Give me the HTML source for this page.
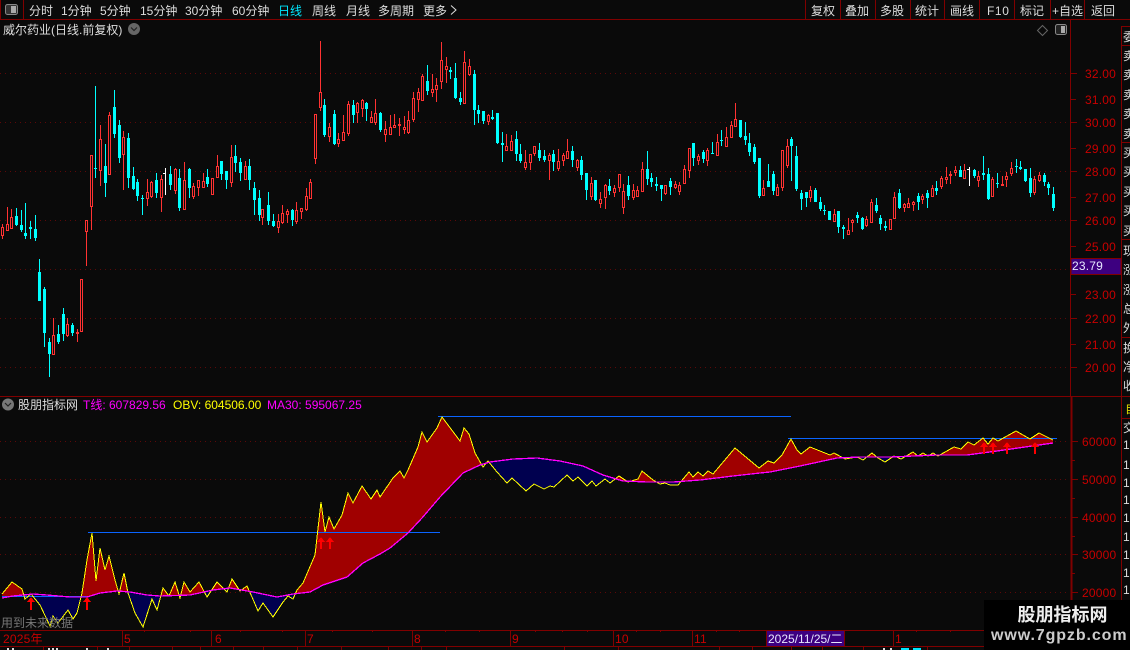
<!DOCTYPE html>
<html><head><meta charset="utf-8"><title>威尔药业</title>
<style>
html,body{margin:0;padding:0;background:#0a0a0a;width:1130px;height:650px;overflow:hidden}
svg{display:block;position:absolute;left:0;top:0}
text{font-family:"Liberation Sans","WenQuanYi Zen Hei","Noto Sans CJK SC",sans-serif;font-size:12px;fill:#ddd}
.p{fill:#c80000;letter-spacing:.2px}
.s{fill:#ddd}
</style></head><body>
<svg width="1130" height="650" viewBox="0 0 1130 650" xmlns="http://www.w3.org/2000/svg">
<rect width="1130" height="650" fill="#0a0a0a"/>
<!-- grid -->
<path d="M0 73.5H1070M0 122.5H1070M0 171.5H1070M0 220.5H1070M0 269.5H1070M0 318.5H1070M0 367.5H1070M0 441.5H1070M0 479.5H1070M0 517.5H1070M0 554.5H1070M0 592.5H1070" stroke="#5c0808" stroke-dasharray="1 4" fill="none"/>
<!-- frame -->
<g shape-rendering="crispEdges" stroke="#800000" fill="none">
<path d="M0 19.5H1130M0 396.5H1130M0 630.5H1130M0 646.5H1130"/>
<path d="M0.5 0V19M23.5 0V19M805.5 0V19M840.5 0V19M875.5 0V19M910.5 0V19M944.5 0V19M979.5 0V19M1014.5 0V19M1050.5 0V19M1084.5 0V19"/>
<path d="M1070.5 20V396M1121.5 26V650M1121 26.5H1130M1121 45.5H1130M1121 142.5H1130M1121 239.5H1130M1121 337.5H1130M1121 418.5H1130" />
<path d="M1071.5 396V630" stroke-width="2"/>
<path d="M1071 73.5h6M1071 99.5h5M1071 122.5h6M1071 148.5h5M1071 171.5h6M1071 197.5h5M1071 220.5h6M1071 246.5h5M1071 294.5h5M1071 318.5h6M1071 344.5h5M1071 367.5h6M1072 441.5h6M1072 460.5h3M1072 479.5h6M1072 498.5h3M1072 517.5h6M1072 536.5h3M1072 554.5h6M1072 573.5h3M1072 592.5h6"/>
<path d="M122.5 630v16M211.5 630v16M305.5 630v16M412.5 630v16M510.5 630v16M613.5 630v16M692.5 630v16M893.5 630v16M144.5 630v2M190.5 630v2M240.5 630v2M282.5 630v2M332.5 630v2M372.5 630v2M445.5 630v2M479.5 630v2M535.5 630v2M562.5 630v2M587.5 630v2M636.5 630v2M660.5 630v2M716.5 630v2M739.5 630v2M916.5 630v2M950.5 630v2"/>
<path d="M43.5 646v4M97.5 646v4M129.5 646v4M172.5 646v4M200.5 646v4M233.5 646v4M263.5 646v4M297.5 646v4M341.5 646v4M388.5 646v4M421.5 646v4M446.5 646v4M564.5 646v4M618.5 646v4M719.5 646v4M752.5 646v4M791.5 646v4M822.5 646v4M863.5 646v4M927.5 646v4"/>
</g>
<!-- candles: wicks -->
<g shape-rendering="crispEdges" fill="none">
<path stroke="#0ff" d="M16.5 208V226M21.5 210V232M25.5 203V239M30.5 221V239M35.5 215V241M39.5 259V301M44.5 287V347M49.5 338V377M58.5 325V344M63.5 308V341M72.5 323V336M95.5 86V178M105.5 144V197M114.5 90V138M119.5 120V163M128.5 133V188M133.5 167V190M137.5 179V201M142.5 195V215M156.5 173V198M170.5 166V190M179.5 169V211M189.5 168V198M207.5 169V187M221.5 161V180M226.5 171V189M235.5 145V172M240.5 158V181M249.5 159V190M254.5 182V215M259.5 190V221M268.5 192V225M273.5 214V227M292.5 209V226M324.5 99V137M334.5 110V145M353.5 100V123M366.5 102V121M380.5 112V132M427.5 65V95M450.5 67V79M455.5 63V99M460.5 92V105M474.5 70V125M478.5 105V123M483.5 111V124M492.5 110V120M497.5 113V144M502.5 132V162M516.5 131V161M520.5 144V163M539.5 143V161M544.5 150V162M553.5 150V171M572.5 146V167M581.5 156V180M586.5 173V200M595.5 180V201M609.5 179V195M628.5 176V200M647.5 151V185M651.5 173V187M656.5 177V191M661.5 185V201M670.5 178V195M693.5 143V166M703.5 150V163M712.5 142V154M721.5 130V146M740.5 120V138M745.5 122V145M749.5 133V156M754.5 144V164M759.5 158V198M768.5 164V187M773.5 171V195M791.5 137V181M796.5 146V191M801.5 190V210M806.5 192V207M815.5 188V202M820.5 197V211M824.5 205V215M829.5 211V220M838.5 211V233M843.5 225V239M857.5 212V223M862.5 217V230M876.5 198V213M880.5 215V230M885.5 221V231M899.5 189V209M918.5 193V210M927.5 190V208M936.5 181V195M960.5 166V177M974.5 169V178M983.5 156V180M988.5 168V200M997.5 173V188M1016.5 159V173M1020.5 161V170M1025.5 169V182M1030.5 168V197M1044.5 173V186M1048.5 182V195M1053.5 187V211"/>
<path stroke="#0ff" stroke-width="3" d="M16.5 216V225M21.5 225V230M25.5 233V236M30.5 227V229M35.5 229V238M39.5 272V301M44.5 289V333M49.5 342V354M58.5 334V342M63.5 314V334M72.5 325V333M95.5 168V169M105.5 166V183M114.5 107V134M119.5 125V158M128.5 138V178M133.5 176V189M137.5 182V196M142.5 198V199M156.5 180V193M170.5 174V185M179.5 178V208M189.5 169V188M207.5 177V184M221.5 161V174M226.5 171V180M235.5 156V163M240.5 162V173M249.5 166V180M254.5 188V200M259.5 198V215M268.5 205V221M273.5 221V226M292.5 210V220M324.5 105V135M334.5 114V144M353.5 105V115M366.5 103V109M380.5 113V130M427.5 81V91M450.5 70V72M455.5 78V98M460.5 98V102M474.5 74V110M478.5 110V114M483.5 111V121M492.5 117V119M497.5 113V143M502.5 143V145M516.5 139V154M520.5 154V161M539.5 150V158M544.5 156V160M553.5 154V162M572.5 151V160M581.5 160V175M586.5 173V190M595.5 180V200M609.5 186V191M628.5 185V196M647.5 169V179M651.5 178V182M656.5 184V186M661.5 185V189M670.5 181V187M693.5 143V158M703.5 152V159M712.5 153V154M721.5 140V141M740.5 120V137M745.5 136V140M749.5 143V152M754.5 147V162M759.5 158V196M768.5 181V187M773.5 174V191M791.5 139V146M796.5 156V189M801.5 193V199M806.5 192V198M815.5 190V202M820.5 202V209M824.5 210V211M829.5 211V220M838.5 211V227M843.5 227V229M857.5 215V218M862.5 218V229M876.5 205V211M880.5 218V224M885.5 226V228M899.5 193V208M918.5 196V202M927.5 193V198M936.5 188V191M960.5 170V177M974.5 170V176M983.5 173V175M988.5 174V199M997.5 183V184M1016.5 166V167M1020.5 167V169M1025.5 169V181M1030.5 178V193M1044.5 175V182M1048.5 184V188M1053.5 194V208"/>
<path stroke="#ff3232" d="M2.5 224V239M7.5 207V230M11.5 209V228M53.5 318V354M67.5 318V337M77.5 329V342M86.5 220V266M91.5 155V230M100.5 125V186M109.5 112V174M123.5 131V190M147.5 179V206M151.5 181V198M161.5 175V212M175.5 168V194M184.5 162V209M193.5 183V199M198.5 180V196M203.5 173V187M217.5 155V178M231.5 145V187M245.5 161V179M262.5 209V225M278.5 214V233M282.5 205V224M287.5 209V223M296.5 202V224M301.5 208V219M306.5 188V211M310.5 179V199M315.5 114V164M320.5 41V111M329.5 123V142M338.5 133V147M343.5 115V140M348.5 101V136M357.5 102V123M362.5 99V117M371.5 111V122M375.5 99V125M385.5 121V142M390.5 115V135M394.5 114V127M399.5 118V136M404.5 116V134M408.5 111V134M413.5 92V122M418.5 88V112M422.5 74V101M432.5 74V97M436.5 78V102M441.5 42V89M446.5 57V83M464.5 51V103M469.5 59V76M488.5 114V125M506.5 134V150M511.5 135V150M525.5 150V170M530.5 154V170M534.5 146V156M549.5 153V180M558.5 149V171M563.5 153V166M567.5 139V159M577.5 159V171M591.5 177V200M600.5 192V208M605.5 184V209M614.5 185V197M619.5 174V192M623.5 184V214M633.5 184V200M637.5 186V196M642.5 162V191M665.5 185V195M675.5 181V189M679.5 182V195M684.5 165V183M689.5 148V178M698.5 154V165M707.5 148V166M717.5 134V155M726.5 127V146M731.5 121V138M735.5 103V127M763.5 180V195M777.5 184V195M782.5 150V191M787.5 139V168M810.5 186V202M834.5 209V221M848.5 218V234M852.5 219V232M866.5 216V227M871.5 199V223M890.5 219V230M894.5 192V218M904.5 203V212M908.5 198V208M913.5 201V211M922.5 194V204M932.5 185V196M941.5 176V189M946.5 167V184M950.5 171V184M955.5 166V176M964.5 164V178M978.5 171V187M992.5 177V196M1002.5 176V186M1006.5 172V187M1011.5 162V176M1034.5 176V195M1039.5 172V182"/>
<path stroke="#fff" d="M165.5 168V195M163 173.5h2M969.5 167V186M967 169.5h2"/>
<path stroke="#ff3232" fill="#0a0a0a" d="M1.5 227.5h2V235.5h-2zM6.5 224.5h2V230.5h-2zM10.5 217.5h2V228.5h-2zM52.5 335.5h2V354.5h-2zM66.5 324.5h2V335.5h-2zM76.5 332.5h2V333.5h-2zM80.5 279.5h2V331.5h-2zM85.5 220.5h2V231.5h-2zM90.5 155.5h2V206.5h-2zM99.5 139.5h2V170.5h-2zM108.5 115.5h2V174.5h-2zM122.5 137.5h2V154.5h-2zM146.5 192.5h2V198.5h-2zM150.5 182.5h2V196.5h-2zM160.5 179.5h2V197.5h-2zM174.5 169.5h2V190.5h-2zM183.5 180.5h2V209.5h-2zM192.5 186.5h2V196.5h-2zM197.5 180.5h2V187.5h-2zM202.5 181.5h2V187.5h-2zM211.5 178.5h2V194.5h-2zM216.5 166.5h2V177.5h-2zM230.5 157.5h2V182.5h-2zM244.5 166.5h2V179.5h-2zM261.5 209.5h2V217.5h-2zM277.5 221.5h2V227.5h-2zM281.5 213.5h2V222.5h-2zM286.5 211.5h2V214.5h-2zM295.5 210.5h2V221.5h-2zM300.5 208.5h2V211.5h-2zM305.5 196.5h2V209.5h-2zM309.5 182.5h2V198.5h-2zM314.5 114.5h2V158.5h-2zM319.5 92.5h2V107.5h-2zM328.5 127.5h2V136.5h-2zM337.5 139.5h2V143.5h-2zM342.5 132.5h2V140.5h-2zM347.5 104.5h2V133.5h-2zM356.5 103.5h2V112.5h-2zM361.5 100.5h2V108.5h-2zM370.5 117.5h2V122.5h-2zM374.5 113.5h2V122.5h-2zM384.5 129.5h2V134.5h-2zM389.5 127.5h2V134.5h-2zM393.5 125.5h2V127.5h-2zM398.5 124.5h2V125.5h-2zM403.5 127.5h2V129.5h-2zM407.5 120.5h2V132.5h-2zM412.5 98.5h2V119.5h-2zM417.5 92.5h2V99.5h-2zM421.5 76.5h2V100.5h-2zM431.5 89.5h2V92.5h-2zM435.5 85.5h2V89.5h-2zM440.5 60.5h2V81.5h-2zM445.5 66.5h2V69.5h-2zM463.5 62.5h2V103.5h-2zM468.5 66.5h2V74.5h-2zM487.5 115.5h2V121.5h-2zM505.5 146.5h2V150.5h-2zM510.5 141.5h2V150.5h-2zM524.5 162.5h2V167.5h-2zM529.5 154.5h2V162.5h-2zM533.5 146.5h2V153.5h-2zM548.5 155.5h2V160.5h-2zM557.5 161.5h2V168.5h-2zM562.5 155.5h2V160.5h-2zM566.5 151.5h2V158.5h-2zM576.5 160.5h2V167.5h-2zM590.5 183.5h2V196.5h-2zM599.5 199.5h2V203.5h-2zM604.5 185.5h2V197.5h-2zM613.5 188.5h2V192.5h-2zM618.5 174.5h2V187.5h-2zM622.5 191.5h2V207.5h-2zM632.5 190.5h2V197.5h-2zM636.5 190.5h2V196.5h-2zM641.5 169.5h2V191.5h-2zM664.5 185.5h2V193.5h-2zM674.5 184.5h2V187.5h-2zM678.5 185.5h2V191.5h-2zM683.5 169.5h2V183.5h-2zM688.5 148.5h2V170.5h-2zM697.5 156.5h2V160.5h-2zM706.5 150.5h2V160.5h-2zM716.5 142.5h2V155.5h-2zM725.5 137.5h2V146.5h-2zM730.5 125.5h2V137.5h-2zM734.5 119.5h2V126.5h-2zM762.5 188.5h2V195.5h-2zM776.5 187.5h2V195.5h-2zM781.5 150.5h2V187.5h-2zM786.5 146.5h2V165.5h-2zM809.5 190.5h2V197.5h-2zM833.5 214.5h2V221.5h-2zM847.5 230.5h2V234.5h-2zM851.5 220.5h2V222.5h-2zM865.5 219.5h2V225.5h-2zM870.5 202.5h2V222.5h-2zM889.5 219.5h2V229.5h-2zM893.5 197.5h2V218.5h-2zM903.5 204.5h2V207.5h-2zM907.5 203.5h2V207.5h-2zM912.5 202.5h2V204.5h-2zM921.5 196.5h2V199.5h-2zM931.5 188.5h2V196.5h-2zM940.5 178.5h2V186.5h-2zM945.5 177.5h2V179.5h-2zM949.5 174.5h2V175.5h-2zM954.5 170.5h2V172.5h-2zM963.5 170.5h2V178.5h-2zM977.5 176.5h2V180.5h-2zM991.5 179.5h2V196.5h-2zM1001.5 184.5h2V185.5h-2zM1005.5 176.5h2V179.5h-2zM1010.5 168.5h2V173.5h-2zM1033.5 179.5h2V192.5h-2zM1038.5 175.5h2V180.5h-2z"/>
</g>
<!-- indicator -->
<defs>
<clipPath id="up"><polygon points="2,598 13,596 33,594 47,595 70,597 87,597 100,593 117,591 130,592 147,595 160,596 190,595 213,590 230,588 253,592 277,597 293,594 310,592 323,585 347,577 363,563 380,554 390,548 408,533 422,518 440,497 463,473 480,465 490,462 513,459 537,458 560,461 583,466 603,475 623,481 647,482 673,482 700,480 733,476 760,473 770,472 800,466 837,458 860,457 890,457 937,455 967,455 997,451 1053,443 1053,397 2,397"/></clipPath>
<clipPath id="dn"><polygon points="2,598 13,596 33,594 47,595 70,597 87,597 100,593 117,591 130,592 147,595 160,596 190,595 213,590 230,588 253,592 277,597 293,594 310,592 323,585 347,577 363,563 380,554 390,548 408,533 422,518 440,497 463,473 480,465 490,462 513,459 537,458 560,461 583,466 603,475 623,481 647,482 673,482 700,480 733,476 760,473 770,472 800,466 837,458 860,457 890,457 937,455 967,455 997,451 1053,443 1053,630 2,630"/></clipPath>
<polygon id="ar" points="2,594 12,582 22,589 25,599 31,594 40,605 50,626 53,616 58,623 68,610 73,619 77,613 82,593 87,560 92,533 96,581 100,548 105,570 109,556 115,580 119,594 124,573 128,593 135,613 143,627 152,599 157,610 163,588 169,596 175,582 180,598 184,582 190,592 199,582 207,597 217,582 227,592 232,579 240,591 247,586 252,597 258,611 263,603 273,617 283,602 288,596 293,599 297,590 303,583 315,555 321,502 325,532 329,517 334,529 342,515 348,493 353,503 362,486 371,499 377,490 380,497 393,478 400,471 404,478 408,470 418,447 422,432 427,442 437,428 442,417 460,441 464,428 469,434 475,453 483,467 488,461 497,472 507,483 512,478 526,491 534,484 544,489 550,486 554,487 567,475 573,481 578,477 587,486 592,481 596,486 605,479 610,483 619,476 628,482 638,479 642,471 653,480 660,484 665,483 670,485 678,485 689,472 693,477 698,472 703,476 708,471 713,474 735,448 747,458 759,468 768,461 774,463 782,455 791,439 797,450 801,454 810,447 830,455 834,453 845,459 857,457 863,460 872,453 878,458 885,462 894,456 901,459 913,452 918,456 923,453 928,456 933,453 938,456 954,447 961,449 968,442 974,445 983,438 988,444 993,438 998,441 1016,431 1030,439 1039,433 1053,440 1053,443 997,451 967,455 937,455 890,457 860,457 837,458 800,466 770,472 760,473 733,476 700,480 673,482 647,482 623,481 603,475 583,466 560,461 537,458 513,459 490,462 480,465 463,473 440,497 422,518 408,533 390,548 380,554 363,563 347,577 323,585 310,592 293,594 277,597 253,592 230,588 213,590 190,595 160,596 147,595 130,592 117,591 100,593 87,597 70,597 47,595 33,594 13,596 2,598"/>
</defs>
<g clip-path="url(#up)"><use href="#ar" fill="#a00000"/></g>
<g clip-path="url(#dn)"><use href="#ar" fill="#00004f"/></g>
<g fill="none" shape-rendering="crispEdges">
<path stroke="#0a64ff" d="M2 596.5H88M88 532.5H440M438 416.5H791M788 438.5H1057"/>
<polyline stroke="#ffff00" points="2,594 12,582 22,589 25,599 31,594 40,605 50,626 53,616 58,623 68,610 73,619 77,613 82,593 87,560 92,533 96,581 100,548 105,570 109,556 115,580 119,594 124,573 128,593 135,613 143,627 152,599 157,610 163,588 169,596 175,582 180,598 184,582 190,592 199,582 207,597 217,582 227,592 232,579 240,591 247,586 252,597 258,611 263,603 273,617 283,602 288,596 293,599 297,590 303,583 315,555 321,502 325,532 329,517 334,529 342,515 348,493 353,503 362,486 371,499 377,490 380,497 393,478 400,471 404,478 408,470 418,447 422,432 427,442 437,428 442,417 460,441 464,428 469,434 475,453 483,467 488,461 497,472 507,483 512,478 526,491 534,484 544,489 550,486 554,487 567,475 573,481 578,477 587,486 592,481 596,486 605,479 610,483 619,476 628,482 638,479 642,471 653,480 660,484 665,483 670,485 678,485 689,472 693,477 698,472 703,476 708,471 713,474 735,448 747,458 759,468 768,461 774,463 782,455 791,439 797,450 801,454 810,447 830,455 834,453 845,459 857,457 863,460 872,453 878,458 885,462 894,456 901,459 913,452 918,456 923,453 928,456 933,453 938,456 954,447 961,449 968,442 974,445 983,438 988,444 993,438 998,441 1016,431 1030,439 1039,433 1053,440"/>
<polyline stroke="#ff00ff" stroke-width="1.3" points="2,598 13,596 33,594 47,595 70,597 87,597 100,593 117,591 130,592 147,595 160,596 190,595 213,590 230,588 253,592 277,597 293,594 310,592 323,585 347,577 363,563 380,554 390,548 408,533 422,518 440,497 463,473 480,465 490,462 513,459 537,458 560,461 583,466 603,475 623,481 647,482 673,482 700,480 733,476 760,473 770,472 800,466 837,458 860,457 890,457 937,455 967,455 997,451 1053,443"/>
</g>
<!-- arrows -->
<g fill="#ff0000" shape-rendering="crispEdges">
<path d="M31 597l4 5h-3v8h-2v-8h-3z"/><path d="M87 597l4 5h-3v8h-2v-8h-3z"/>
<path d="M321 537l4 5h-3v7h-2v-7h-3z"/><path d="M330 537l4 5h-3v7h-2v-7h-3z"/>
<path d="M984 442l4 5h-3v7h-2v-7h-3z"/><path d="M993 442l4 5h-3v7h-2v-7h-3z"/>
<path d="M1007 442l4 5h-3v7h-2v-7h-3z"/><path d="M1035 442l4 5h-3v7h-2v-7h-3z"/>
</g>
<!-- top bar text -->
<g>
<rect x="5.5" y="4.5" width="12" height="10" rx="2" fill="#333" stroke="#888"/><rect x="11" y="6" width="5" height="7" fill="#aaa"/>
<text x="29" y="15">分时</text><text x="61" y="15">1分钟</text><text x="100" y="15">5分钟</text><text x="140" y="15">15分钟</text><text x="185" y="15">30分钟</text><text x="232" y="15">60分钟</text>
<text x="278" y="15" style="fill:#00e8ff">日线</text><text x="312" y="15">周线</text><text x="346" y="15">月线</text><text x="378" y="15">多周期</text><text x="423" y="15">更多</text>
<path d="M451 5.500l5 4.500-5 4.500" fill="none" stroke="#ddd"/>
<text x="811" y="15">复权</text><text x="845" y="15">叠加</text><text x="880" y="15">多股</text><text x="915" y="15">统计</text><text x="950" y="15">画线</text><text x="987" y="15" style="letter-spacing:.6px">F10</text><text x="1020" y="15">标记</text><text x="1052" y="15">+自选</text><text x="1091" y="15">返回</text>
<text x="3" y="34">威尔药业(日线.前复权)</text>
<circle cx="134" cy="29" r="6" fill="#666"/><path d="M131 27.500l3 3 3-3" fill="none" stroke="#222" stroke-width="1.200"/>
<path d="M1042.500 25.500l5 5-5 5-5-5z" fill="none" stroke="#666"/>
<rect x="1055.500" y="24.500" width="11" height="10" rx="2" fill="#222" stroke="#888"/><rect x="1061" y="26" width="4" height="7" fill="#aaa"/>
</g>
<!-- price axis -->
<text class="p" x="1085" y="78">32.00</text><text class="p" x="1085" y="104">31.00</text><text class="p" x="1085" y="127">30.00</text><text class="p" x="1085" y="153">29.00</text><text class="p" x="1085" y="176">28.00</text><text class="p" x="1085" y="202">27.00</text><text class="p" x="1085" y="225">26.00</text><text class="p" x="1085" y="251">25.00</text><text class="p" x="1085" y="299">23.00</text><text class="p" x="1085" y="323">22.00</text><text class="p" x="1085" y="349">21.00</text><text class="p" x="1085" y="372">20.00</text>
<rect x="1071" y="258.500" width="50" height="16" fill="#3d0080" stroke="#800000"/>
<text x="1072" y="270" style="fill:#e6e6ff;letter-spacing:.2px">23.79</text>
<!-- sidebar -->
<g>
<text class="s" x="1123" y="41">委</text>
<text class="s" x="1123" y="60">卖</text><text class="s" x="1123" y="79">卖</text><text class="s" x="1123" y="99">卖</text><text class="s" x="1123" y="118">卖</text><text class="s" x="1123" y="138">卖</text>
<text class="s" x="1123" y="157">买</text><text class="s" x="1123" y="176">买</text><text class="s" x="1123" y="196">买</text><text class="s" x="1123" y="215">买</text><text class="s" x="1123" y="235">买</text>
<text class="s" x="1123" y="255">现</text><text class="s" x="1123" y="274">涨</text><text class="s" x="1123" y="294">涨</text><text class="s" x="1123" y="313">总</text><text class="s" x="1123" y="332">外</text>
<text class="s" x="1123" y="352">换</text><text class="s" x="1123" y="371">净</text><text class="s" x="1123" y="390">收</text>
<text x="1125" y="413" style="fill:#d8d800">自</text><text class="s" x="1123" y="432">交</text>
<text class="s" x="1123" y="449">1</text><text class="s" x="1123" y="469">1</text><text class="s" x="1123" y="487">1</text><text class="s" x="1123" y="504">1</text><text class="s" x="1123" y="522">1</text><text class="s" x="1123" y="541">1</text><text class="s" x="1123" y="559">1</text><text class="s" x="1123" y="577">1</text><text class="s" x="1123" y="594">1</text>
</g>
<!-- indicator header -->
<circle cx="8" cy="404.500" r="6" fill="#777"/><path d="M5 403l3 3 3-3" fill="none" stroke="#222" stroke-width="1.200"/>
<text x="18" y="409">股朋指标网</text>
<text x="83" y="409" style="fill:#ff00ff">T线: 607829.56</text>
<text x="173" y="409" style="fill:#ffff00">OBV: 604506.00</text>
<text x="267" y="409" style="fill:#ff00ff">MA30: 595067.25</text>
<text x="1" y="627" style="fill:#777">用到未来数据</text>
<!-- lower axis labels -->
<text class="p" x="1082" y="446">60000</text><text class="p" x="1082" y="484">50000</text><text class="p" x="1082" y="522">40000</text><text class="p" x="1082" y="559">30000</text><text class="p" x="1082" y="597">20000</text>
<!-- date axis -->
<text class="p" x="3" y="643">2025年</text><text class="p" x="124" y="643">5</text><text class="p" x="215" y="643">6</text><text class="p" x="307" y="643">7</text><text class="p" x="414" y="643">8</text><text class="p" x="512" y="643">9</text><text class="p" x="615" y="643">10</text><text class="p" x="694" y="643">11</text><text class="p" x="895" y="643">1</text>
<rect x="766.500" y="630.500" width="78" height="16" fill="#3d0080" stroke="#800000"/>
<text x="768" y="643" style="fill:#e6e6ff">2025/11/25/二</text>
<!-- bottom status fragments -->
<g shape-rendering="crispEdges">
<path d="M7 648h2v2h-2zM12 648h2v2h-2zM48 648h2v2h-2zM52 648h2v2h-2zM56 648h2v2h-2zM86 648h2v2h-2zM107 648h2v2h-2zM883 648h2v2h-2zM890 648h2v2h-2z" fill="#ddd"/>
<path d="M901 648h8v2h-8zM913 648h8v2h-8z" fill="#00e8ff"/>
</g>
<!-- watermark -->
<rect x="984" y="600" width="146" height="50" fill="#000"/>
<text x="1017.500" y="621" style="font-size:18px;font-weight:bold;fill:#eee">股朋指标网</text>
<text x="991" y="640" style="font-size:16px;font-weight:bold;fill:#ccc;letter-spacing:.9px">www.7gpzb.com</text>
</svg>
</body></html>
